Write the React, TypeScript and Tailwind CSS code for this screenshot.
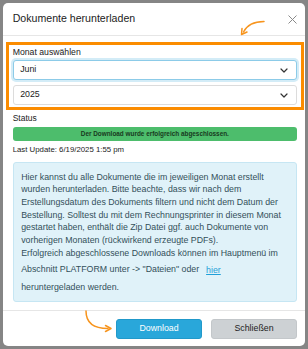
import React from "react";

const font = { fontFamily: '"Liberation Sans", Arial, sans-serif' };

function Chevron() {
  return (
    <svg width="8" height="5" viewBox="0 0 8 5" className="shrink-0">
      <path d="M1 1l3 3 3-3" fill="none" stroke="#333" strokeWidth="1.2" strokeLinecap="round" strokeLinejoin="round" />
    </svg>
  );
}

function Select({ value, focused }: { value: string; focused?: boolean }) {
  return (
    <div
      className={`flex items-center justify-between h-[20px] pl-[6.5px] pr-[8px] rounded-[3px] bg-white text-[8.8px] text-[#222] border ${
        focused ? "border-[#8ccbe8] shadow-[0_0_0_2px_#d3ecf7]" : "border-[#dcdcdc]"
      }`}
    >
      <span>{value}</span>
      <Chevron />
    </div>
  );
}

export default function App() {
  return (
    <div className="relative w-[308px] h-[349px] bg-[#858585] p-[3px] overflow-hidden" style={font}>
      <div className="w-[302px] h-[343px] bg-white rounded-[5px] flex flex-col">
        {/* Header */}
        <div className="h-[33px] shrink-0 flex items-center justify-between pl-[9.7px] pr-[8px] border-b border-[#e6e6e6]">
          <span className="text-[10.6px] text-[#222]">Dokumente herunterladen</span>
          <svg width="9" height="9" viewBox="0 0 9 9">
            <path d="M0.5 0.5l8 8M8.5 0.5l-8 8" stroke="#8a8a8a" strokeWidth="1" />
          </svg>
        </div>

        {/* Body */}
        <div className="flex-1 pl-[9.7px] pr-[8px] pt-[9px] pb-[8px] flex flex-col">
          <div className="text-[8.7px] leading-[14px] text-[#222]">Monat auswählen</div>
          <div className="mt-[1px]">
            <Select value="Juni" focused />
          </div>
          <div className="mt-[5px]">
            <Select value="2025" />
          </div>
          <div className="mt-[6px] text-[8.5px] leading-[14px] text-[#222]">Status</div>
          <div className="mt-[2px] h-[14px] rounded-[3px] bg-[#4dbd6c] flex items-center justify-center text-[6.4px] font-bold text-[#183a20]">
            Der Download wurde erfolgreich abgeschlossen.
          </div>
          <div className="mt-[2px] text-[7.8px] leading-[14px] text-[#222]">Last Update: 6/19/2025 1:55 pm</div>

          <div className="mt-[5px] rounded-[3px] border border-[#c6e6f3] bg-[#e0f2f9] px-[7.5px] py-[7.5px] text-[8.8px] leading-[12.7px] text-[#33505a] whitespace-nowrap">
            Hier kannst du alle Dokumente die im jeweiligen Monat erstellt
            <br />
            wurden herunterladen. Bitte beachte, dass wir nach dem
            <br />
            Erstellungsdatum des Dokuments filtern und nicht dem Datum der
            <br />
            Bestellung. Solltest du mit dem Rechnungsprinter in diesem Monat
            <br />
            gestartet haben, enthält die Zip Datei ggf. auch Dokumente von
            <br />
            vorherigen Monaten (rückwirkend erzeugte PDFs).
            <br />
            Erfolgreich abgeschlossene Downloads können im Hauptmenü im
            <br />
            Abschnitt PLATFORM unter -&gt; "Dateien" oder{" "}
            <span className="inline-block px-[4.5px] py-[4.3px] leading-[12.7px] text-[#1f9fd8] underline">hier</span>
            <br />
            heruntergeladen werden.
          </div>
        </div>

        {/* Footer */}
        <div className="h-[37px] shrink-0 border-t border-[#e6e6e6] flex items-center justify-end gap-[9px] pr-[8px]">
          <button className="w-[86px] h-[20px] rounded-[3px] bg-[#29a7da] border border-[#2199ca] text-white text-[8.8px]">
            Download
          </button>
          <button className="w-[86px] h-[20px] rounded-[3px] bg-[#cdd1d4] border border-[#c3c7ca] text-[#222] text-[8.8px]">
            Schließen
          </button>
        </div>
      </div>

      {/* Annotations */}
      <div className="absolute left-[6px] top-[42px] w-[298px] h-[68px] border-[3px] border-[#fb8c00] pointer-events-none" />
      <svg className="absolute left-0 top-0 pointer-events-none" width="308" height="349" viewBox="0 0 308 349">
        <path d="M264 21.5 C254 21.5 247 25 243.5 32" fill="none" stroke="#f7941d" strokeWidth="1.5" strokeLinecap="round" />
        <path d="M241.5 34.5 L242 28.5 M241.5 34.5 L247 32" fill="none" stroke="#f7941d" strokeWidth="1.5" strokeLinecap="round" />
        <path d="M86 311 C86 322 93 328.5 108 328.5" fill="none" stroke="#f7941d" strokeWidth="1.5" strokeLinecap="round" />
        <path d="M111 328.5 L105.5 325.5 M111 328.5 L105.5 331.5" fill="none" stroke="#f7941d" strokeWidth="1.5" strokeLinecap="round" />
      </svg>
    </div>
  );
}
